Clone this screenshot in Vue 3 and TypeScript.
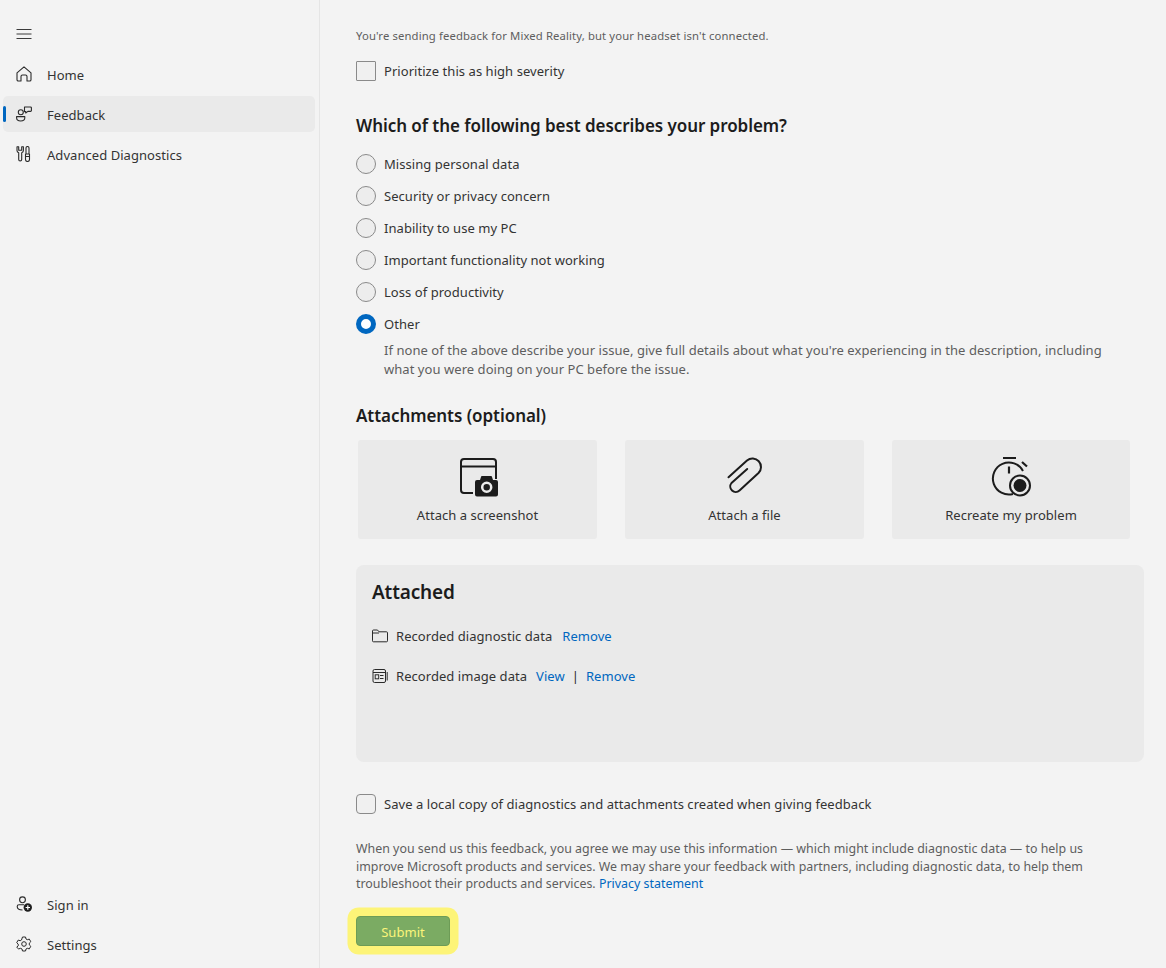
<script setup lang="ts">
const nav = [
  { label: 'Home', icon: 'home', active: false },
  { label: 'Feedback', icon: 'feedback', active: true },
  { label: 'Advanced Diagnostics', icon: 'tools', active: false },
]
const options = [
  'Missing personal data',
  'Security or privacy concern',
  'Inability to use my PC',
  'Important functionality not working',
  'Loss of productivity',
]
</script>

<template>
  <div class="app">
    <aside class="sidebar">
      <div class="top">
        <div class="hamburger">
          <svg width="16" height="12" viewBox="0 0 16 12" fill="none" stroke="#3a3a3a" stroke-width="1"><path d="M0.5 1.5h15M0.5 6h15M0.5 10.5h15"/></svg>
        </div>
        <div v-for="n in nav" :key="n.label" class="nav-item" :class="{ active: n.active }">
          <span v-if="n.active" class="pill"></span>
          <svg v-if="n.icon === 'home'" class="nav-icon" viewBox="0 0 16 16" fill="none" stroke="#2a2a2a" stroke-width="1.1" stroke-linejoin="round"><path d="M1 6.800 8 .8l7 6v6.900a1.300 1.300 0 0 1-1.300 1.300H11v-4.500a1.500 1.500 0 0 0-1.500-1.500h-3A1.500 1.500 0 0 0 5 10.500V15H2.300A1.300 1.300 0 0 1 1 13.700z"/></svg>
          <svg v-else-if="n.icon === 'feedback'" class="nav-icon" viewBox="0 0 16 16" fill="none" stroke="#2a2a2a" stroke-width="1.1" stroke-linejoin="round"><circle cx="4.800" cy="6.200" r="2.500"/><path d="M.6 10.600h8.200v1.200c0 2-1.800 3.200-4.100 3.200S.6 13.800.6 11.800zM8.500 1h6a.9.9 0 0 1 .9.9v2.600a.9.9 0 0 1-.9.9h-2.600L9.700 7V5.600H8.500z"/></svg>
          <svg v-else class="nav-icon" viewBox="0 0 16 16" fill="none" stroke="#2a2a2a" stroke-width="1.1" stroke-linejoin="round"><path d="M1 .8v3.700c0 1.200.8 2 1.700 2.300v6.600a1.500 1.500 0 0 0 3 0V6.800c.9-.3 1.700-1.100 1.700-2.300V.8L5.700.8v3.400H2.700V.8z"/><path d="M10 2a1.500 1.500 0 0 1 3 0v6h-3zM9.500 8h4v5.500a2 2 0 0 1-4 0zM9.500 10.500h4"/></svg>
          <span class="nav-label">{{ n.label }}</span>
        </div>
      </div>
      <div class="bottom">
        <div class="nav-item">
          <svg class="nav-icon" viewBox="0 0 16 16" fill="none" stroke="#2a2a2a" stroke-width="1.1"><circle cx="6.500" cy="3.800" r="2.900"/><path d="M8 8.800H3a1.800 1.800 0 0 0-1.800 1.800c0 2 2 3.400 5.300 3.400"/><circle cx="11.800" cy="11.500" r="4.200" fill="#1f1f1f" stroke="none"/><path d="M11.800 9.300v4.400M9.600 11.500H14" stroke="#fff" stroke-width="1.200"/></svg>
          <span class="nav-label">Sign in</span>
        </div>
        <div class="nav-item">
          <svg class="nav-icon" viewBox="0 0 16 16" fill="none" stroke="#2a2a2a" stroke-width="1" stroke-linejoin="round"><path d="M6.500 1h3l.5 2 1.300.7 2-.6 1.500 2.600-1.500 1.400v1.800l1.500 1.400-1.500 2.600-2-.6-1.300.7-.5 2h-3l-.5-2-1.300-.7-2 .6L.7 11.300l1.500-1.400V8.100L.7 6.700l1.500-2.600 2 .6L5.500 4z"/><circle cx="8" cy="8" r="2.300"/></svg>
          <span class="nav-label">Settings</span>
        </div>
      </div>
    </aside>

    <main class="content">
      <p class="note">You're sending feedback for Mixed Reality, but your headset isn't connected.</p>
      <label class="check first"><span class="box square"></span>Prioritize this as high severity</label>

      <h2 class="heading problem">Which of the following best describes your problem?</h2>
      <div class="radios">
        <div v-for="o in options" :key="o" class="radio"><span class="circle"></span>{{ o }}</div>
        <div class="radio"><span class="circle on"></span>Other</div>
      </div>
      <p class="hint">If none of the above describe your issue, give full details about what you're experiencing in the description, including what you were doing on your PC before the issue.</p>

      <h2 class="heading attach-title">Attachments (optional)</h2>
      <div class="tiles">
        <div class="tile">
          <svg width="40" height="40" viewBox="-1 0 40 40" fill="none" stroke="#1c1c1c" stroke-width="2"><path d="M14 36H5a3 3 0 0 1-3-3V5a3 3 0 0 1 3-3h29a3 3 0 0 1 3 3v17M2 9.500h35" /><path fill="#1c1c1c" stroke="none" d="M18 39.500a2 2 0 0 1-2-2V25a2 2 0 0 1 2-2h3l1-3a1 1 0 0 1 1-1h9a1 1 0 0 1 1 1l1 3h3a2 2 0 0 1 2 2v12.500a2 2 0 0 1-2 2z"/><circle cx="27.700" cy="30.300" r="4.500" fill="#1c1c1c" stroke="#eaeaea" stroke-width="2.500"/></svg>
          <span>Attach a screenshot</span>
        </div>
        <div class="tile">
          <svg width="40" height="40" viewBox="0 0 40 40" fill="none" stroke="#1c1c1c" stroke-width="2" stroke-linecap="round" stroke-linejoin="round"><path d="M3.500 20.300 22 3.500A8.500 8.500 0 0 1 33.500 16L14.500 33.500A5.500 5.500 0 0 1 6.500 26L22.200 12"/></svg>
          <span>Attach a file</span>
        </div>
        <div class="tile">
          <svg width="40" height="40" viewBox="0 0 40 40" fill="none" stroke="#1c1c1c" stroke-width="2"><path d="M12 1h13M18 9.500v7M31 5l5 4.500" stroke-width="2.200"/><path d="M32 14A16 16 0 1 0 22 37"/><circle cx="29" cy="28.500" r="10" fill="#eaeaea"/><circle cx="29" cy="28.500" r="6.500" fill="#1c1c1c" stroke="none"/></svg>
          <span>Recreate my problem</span>
        </div>
      </div>

      <section class="attached">
        <h2 class="heading">Attached</h2>
        <div class="att-row">
          <svg class="att-icon" viewBox="0 0 16 16" fill="none" stroke="#2a2a2a" stroke-width="1"><path d="M.5 3a1 1 0 0 1 1-1h4l1.500 1.800h7.500a1 1 0 0 1 1 1v8a1 1 0 0 1-1 1h-13a1 1 0 0 1-1-1zM.5 5H7"/></svg>
          <span>Recorded diagnostic data</span><a class="link gap">Remove</a>
        </div>
        <div class="att-row second">
          <svg class="att-icon" viewBox="0 0 16 16" fill="none" stroke="#2a2a2a" stroke-width="1"><rect x="1" y="1.500" width="12.500" height="13" rx="1.500"/><path d="M1 4.500h12.500M15.200 4v8.500"/><rect x="3.200" y="6.800" width="3.500" height="4"/><path d="M8 7.500h3.500M8 10.500h3.500"/></svg>
          <span>Recorded image data</span><a class="link gap-s">View</a><span class="sep">|</span><a class="link">Remove</a>
        </div>
      </section>

      <label class="check save"><span class="box rounded"></span>Save a local copy of diagnostics and attachments created when giving feedback</label>

      <p class="legal">When you send us this feedback, you agree we may use this information — which might include diagnostic data — to help us improve Microsoft products and services. We may share your feedback with partners, including diagnostic data, to help them troubleshoot their products and services. <a class="link">Privacy statement</a></p>

      <div class="submit-wrap"><button class="submit" type="button">Submit</button></div>
    </main>
  </div>
</template>

<style>
html, body { margin: 0; background: #f3f3f3; }
</style>

<style scoped>
.app {
  display: flex;
  width: 1166px;
  height: 968px;
  overflow: hidden;
  background: #f3f3f3;
  color: #1f1f1f;
  font-family: "Noto Sans", "Open Sans", sans-serif;
  font-size: 13px;
  letter-spacing: 0.05px;
}
.sidebar {
  box-sizing: border-box;
  width: 320px;
  height: 968px;
  flex: none;
  border-right: 1px solid #e5e5e5;
  padding: 14px 4px 6px 3px;
  display: flex;
  flex-direction: column;
  justify-content: space-between;
}
.hamburger { height: 40px; padding-left: 13px; display: flex; align-items: center; margin-bottom: 2px; }
.nav-item {
  position: relative;
  height: 36px;
  margin-bottom: 4px;
  border-radius: 5px;
  display: flex;
  align-items: center;
  padding-left: 13px;
  gap: 15px;
  color: #333;
}
.nav-label { position: relative; top: 1px; }
.nav-item.active { background: #eaeaea; }
.bottom .nav-item:last-child { margin-bottom: 0; }
.pill {
  position: absolute;
  left: 0;
  top: 10px;
  width: 3px;
  height: 16px;
  border-radius: 2px;
  background: #0067c0;
}
.nav-icon { width: 16px; height: 16px; flex: none; }
.content { flex: 1; padding: 0 22px 0 36px; min-width: 0; }
.note { margin: 28px 0 0; height: 16px; line-height: 16px; font-size: 11.3px; color: #5e5e5e; letter-spacing: 0.12px; }
.check { display: flex; align-items: center; gap: 8px; height: 20px; color: #333; }
.first { margin-top: 17px; }
.box { box-sizing: border-box; width: 20px; height: 20px; border: 1px solid #8a8a8a; background: #f0f0f0; flex: none; }
.square { border-radius: 1px; }
.rounded { border-radius: 4px; }
.heading { margin: 0; font-size: 17px; font-weight: 600; line-height: 24px; color: #1c1c1c; letter-spacing: -0.06px; }
.problem { margin-top: 33px; }
.radios { margin-top: 16px; display: flex; flex-direction: column; gap: 12px; }
.radio { display: flex; align-items: center; gap: 8px; height: 20px; color: #333; }
.circle { box-sizing: border-box; width: 20px; height: 20px; border-radius: 50%; border: 1px solid #8a8a8a; background: #ededed; flex: none; }
.circle.on { border: 5.500px solid #0067c0; background: #fff; }
.hint { margin: 7px 0 0 28px; line-height: 19px; color: #5e5e5e; max-width: 730px; }
.attach-title { margin-top: 25px; }
.tiles { margin: 12px 14px 0 2px; display: grid; grid-template-columns: 239px 239px 238px; column-gap: 28px; }
.tile {
  height: 99px;
  background: #eaeaea;
  border-radius: 3px;
  display: flex;
  flex-direction: column;
  align-items: center;
  padding-top: 17px;
  box-sizing: border-box;
  color: #333;
}
.tile span { margin-top: 9px; line-height: 18px; }
.attached {
  box-sizing: border-box;
  margin-top: 26px;
  height: 197px;
  background: #eaeaea;
  border-radius: 8px;
  padding: 15px 16px;
}
.attached .heading { font-size: 19px; letter-spacing: -0.15px; }
.att-row { display: flex; align-items: center; height: 20px; margin-top: 22px; color: #333; }
.second { margin-top: 20px; }
.att-icon { width: 16px; height: 16px; flex: none; margin-right: 8px; }
.link { color: #0067c0; }
.gap { margin-left: 10px; }
.gap-s { margin-left: 9px; }
.sep { margin: 0 7px; color: #1f1f1f; }
.save { margin-top: 32px; }
.legal { margin: 26px 0 0; font-size: 12.4px; line-height: 17.500px; color: #5e5e5e; letter-spacing: 0.01px; max-width: 745px; }
.submit-wrap { margin-top: 23px; }
.submit {
  display: block;
  box-sizing: border-box;
  width: 94px;
  height: 30px;
  padding: 2px 0 0;
  border: 1px solid #6d9c56;
  border-radius: 4px;
  background: #7bab63;
  color: #fbf57a;
  font: inherit;
  letter-spacing: inherit;
  box-shadow: 0 0 0 8.500px #fdf478;
}
</style>
